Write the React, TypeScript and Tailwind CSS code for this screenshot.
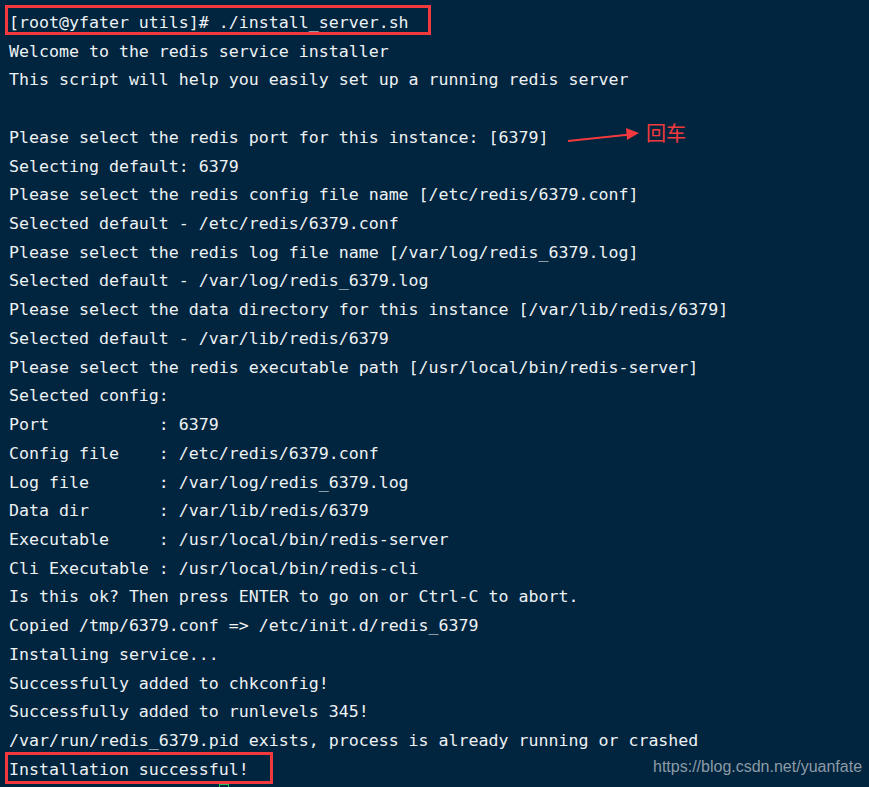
import React from "react";

const lines: string[] = [
  "[root@yfater utils]# ./install_server.sh",
  "Welcome to the redis service installer",
  "This script will help you easily set up a running redis server",
  "",
  "Please select the redis port for this instance: [6379]",
  "Selecting default: 6379",
  "Please select the redis config file name [/etc/redis/6379.conf]",
  "Selected default - /etc/redis/6379.conf",
  "Please select the redis log file name [/var/log/redis_6379.log]",
  "Selected default - /var/log/redis_6379.log",
  "Please select the data directory for this instance [/var/lib/redis/6379]",
  "Selected default - /var/lib/redis/6379",
  "Please select the redis executable path [/usr/local/bin/redis-server]",
  "Selected config:",
  "Port           : 6379",
  "Config file    : /etc/redis/6379.conf",
  "Log file       : /var/log/redis_6379.log",
  "Data dir       : /var/lib/redis/6379",
  "Executable     : /usr/local/bin/redis-server",
  "Cli Executable : /usr/local/bin/redis-cli",
  "Is this ok? Then press ENTER to go on or Ctrl-C to abort.",
  "Copied /tmp/6379.conf => /etc/init.d/redis_6379",
  "Installing service...",
  "Successfully added to chkconfig!",
  "Successfully added to runlevels 345!",
  "/var/run/redis_6379.pid exists, process is already running or crashed",
  "Installation successful!",
];

export default function App() {
  return (
    <div className="relative w-[869px] h-[787px] overflow-hidden bg-[#01253f]">
      <div
        className="flex flex-col pl-[9px] pt-[9px] text-[16.6px] leading-[28.73px] text-[#eef2f4] whitespace-pre"
        style={{ fontFamily: '"DejaVu Sans Mono", "Liberation Mono", monospace' }}
      >
        {lines.map((l, i) => (
          <div key={i} className="h-[28.73px]">
            {l || " "}
          </div>
        ))}
      </div>

      {/* annotation boxes */}
      <div className="absolute left-[5px] top-[5px] w-[426px] h-[30px] border-[3px] border-[#f2393d]" />
      <div className="absolute left-[5px] top-[752px] w-[268px] h-[32px] border-[3px] border-[#f2393d]" />

      {/* arrow */}
      <svg className="absolute left-[560px] top-[120px]" width="90" height="30" viewBox="0 0 90 30">
        <path d="M8 21 L70 14.5" stroke="#f2393d" strokeWidth="2" fill="none" />
        <path d="M66 8 L79 13 L67 20 Z" fill="#f2393d" />
      </svg>
      <div
        className="absolute left-[646px] top-[119px] text-[20px] leading-[28px] text-[#f2393d]"
        style={{ fontFamily: '"Noto Sans CJK SC", sans-serif' }}
      >
        回车
      </div>

      {/* watermark */}
      <div
        className="absolute left-[653px] top-[756px] text-[16px] leading-[22px] text-[#8d9ba6]"
        style={{ fontFamily: '"Liberation Sans", Arial, sans-serif' }}
      >
        https://blog.csdn.net/yuanfate
      </div>

      {/* cursor */}
      <div className="absolute left-[219px] top-[784px] w-[10px] h-[4px] border-[1px] border-[#22c55e]" />
    </div>
  );
}
